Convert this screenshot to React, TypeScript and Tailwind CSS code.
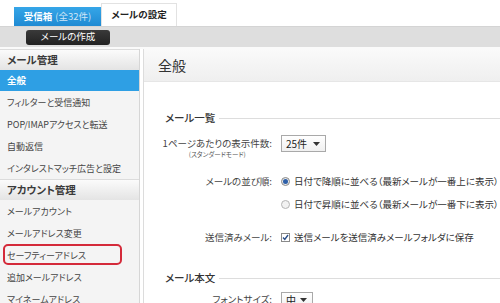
import React from "react";

const items1 = ["フィルターと受信通知", "POP/IMAPアクセスと転送", "自動返信", "インタレストマッチ広告と設定"];
const items2 = ["メールアカウント", "メールアドレス変更", "セーフティーアドレス", "追加メールアドレス", "マイネームアドレス"];

function SideHeader({ label }: { label: string }) {
  return (
    <div className="h-[21px] flex items-center pl-[7px] border-t border-[#dcdcdc] bg-gradient-to-b from-[#fbfbfb] to-[#e4e4e4] text-[10.5px] font-bold text-[#3a3a3a]">
      {label}
    </div>
  );
}

function SideItem({ label, highlight }: { label: string; highlight?: boolean }) {
  return (
    <div className="relative h-[22px] flex items-center pl-[7px] text-[9px] text-[#444] whitespace-nowrap">
      {label}
      {highlight && (
        <div className="absolute left-[3px] top-[0px] w-[119px] h-[21px] border-2 border-[#d42a3a] rounded-[5px]" />
      )}
    </div>
  );
}

function Select({ value, w }: { value: string; w: string }) {
  return (
    <div className={`${w} h-[17px] border border-[#a9a9a9] bg-gradient-to-b from-white to-[#f0f0f0] flex items-center justify-between pl-[4px] pr-[5px] text-[10px] text-[#222]`}>
      <span>{value}</span>
      <svg width="7" height="4" viewBox="0 0 7 4"><path d="M0 0h7L3.5 4z" fill="#333" /></svg>
    </div>
  );
}

function Radio({ checked }: { checked?: boolean }) {
  return (
    <div className={`w-[9px] h-[9px] shrink-0 rounded-full border flex items-center justify-center ${checked ? "border-[#8a8a8a] bg-[#e8e8e8]" : "border-[#b5b5b5] bg-[#f2f2f2]"}`}>
      {checked && <div className="w-[5px] h-[5px] rounded-full bg-[#2d5fa8]" />}
    </div>
  );
}

function SectionHeading({ label }: { label: string }) {
  return (
    <div className="flex items-center h-[14px]">
      <span className="text-[10.5px] font-medium text-[#333] pr-[4px]">{label}</span>
      <div className="flex-1 h-px bg-[#dddddd]" />
    </div>
  );
}

export default function App() {
  return (
    <div className="w-[500px] h-[303px] overflow-hidden bg-white font-['Noto_Sans_CJK_JP','Noto_Sans',sans-serif] [font-feature-settings:'palt'] leading-none">
      {/* tabs */}
      <div className="h-[26px] flex items-end pl-[14px]">
        <div className="w-[87px] h-[19px] flex items-center justify-center bg-gradient-to-b from-[#35a6e8] to-[#1f8ad3] text-[9.5px]">
          <span className="text-white font-bold">受信箱</span>
          <span className="text-[#cfe6f7] ml-[3px]">(全32件)</span>
        </div>
        <div className="w-[76px] h-[23px] flex items-center justify-center bg-white border border-b-0 border-[#e2e2e2] text-[9.5px] font-bold text-[#222]">
          メールの設定
        </div>
      </div>
      {/* gray bar */}
      <div className="h-[21px] bg-[#dedede] border-t border-[#d4d4d4] flex items-center pl-[26px]">
        <div className="w-[84px] h-[15px] rounded-[3px] bg-gradient-to-b from-[#3a3a3a] to-[#222] flex items-center justify-center text-[9.5px] text-white">
          メールの作成
        </div>
      </div>
      <div className="h-[2px] bg-[#fafafa]" />
      {/* body */}
      <div className="flex">
        <div className="w-[140px] shrink-0 bg-[#f4f4f4] border-r border-[#d6d6d6]">
          <SideHeader label="メール管理" />
          <div className="h-[21px] flex items-center pl-[7px] bg-[#2e9fe4] text-[9.5px] font-bold text-white">全般</div>
          {items1.map((t) => (
            <SideItem key={t} label={t} />
          ))}
          <SideHeader label="アカウント管理" />
          {items2.map((t) => (
            <SideItem key={t} label={t} highlight={t === "セーフティーアドレス"} />
          ))}
        </div>
        <div className="w-[3px] shrink-0" />
        <div className="flex-1 border-l border-[#dcdcdc]">
          <div className="h-[33px] flex items-center pl-[14px] bg-gradient-to-b from-[#fafafa] to-[#efefef] border-b border-[#e6e6e6] text-[14px] text-[#333]">
            全般
          </div>
          <div className="pl-[21px]">
            <div className="mt-[29px]">
              <SectionHeading label="メール一覧" />
            </div>
            {/* row 1 */}
            <div className="mt-[10px] flex">
              <div className="w-[107px] flex justify-end">
                <div className="flex flex-col items-center">
                  <div className="h-[17px] flex items-center text-[9.5px] text-[#444] whitespace-nowrap">1ページあたりの表示件数:</div>
                  <div className="text-[6.5px] text-[#555] mt-[-1px] whitespace-nowrap">(スタンダードモード)</div>
                </div>
              </div>
              <div className="ml-[9px]">
                <Select value="25件" w="w-[45px]" />
              </div>
            </div>
            {/* radio */}
            <div className="mt-[17px] flex">
              <div className="w-[107px] h-[14px] flex items-center justify-end text-[9.5px] text-[#444] whitespace-nowrap">メールの並び順:</div>
              <div className="ml-[9px] flex flex-col gap-[9px] whitespace-nowrap">
                <div className="h-[14px] flex items-center gap-[4px] text-[9.5px] text-[#333]">
                  <Radio checked />
                  <span>日付で降順に並べる（最新メールが一番上に表示）</span>
                </div>
                <div className="h-[14px] flex items-center gap-[4px] text-[9.5px] text-[#333]">
                  <Radio />
                  <span>日付で昇順に並べる（最新メールが一番下に表示）</span>
                </div>
              </div>
            </div>
            {/* checkbox */}
            <div className="mt-[19px] flex">
              <div className="w-[107px] h-[14px] flex items-center justify-end text-[9.5px] text-[#444] whitespace-nowrap">送信済みメール:</div>
              <div className="ml-[9px] h-[14px] flex items-center gap-[4px] text-[9.5px] text-[#333] whitespace-nowrap">
                <div className="w-[9px] h-[9px] shrink-0 border border-[#8a8a8a] bg-white flex items-center justify-center">
                  <svg width="7" height="7" viewBox="0 0 7 7"><path d="M1 3.5l1.8 2L6 1" stroke="#2b4f8a" strokeWidth="1.4" fill="none" /></svg>
                </div>
                <span>送信メールを送信済みメールフォルダに保存</span>
              </div>
            </div>
            <div className="mt-[27px]">
              <SectionHeading label="メール本文" />
            </div>
            <div className="mt-[6px] flex">
              <div className="w-[107px] h-[16px] flex items-center justify-end text-[9.5px] text-[#444] whitespace-nowrap">フォントサイズ:</div>
              <div className="ml-[9px]">
                <Select value="中" w="w-[32px]" />
              </div>
            </div>
          </div>
        </div>
      </div>
    </div>
  );
}
